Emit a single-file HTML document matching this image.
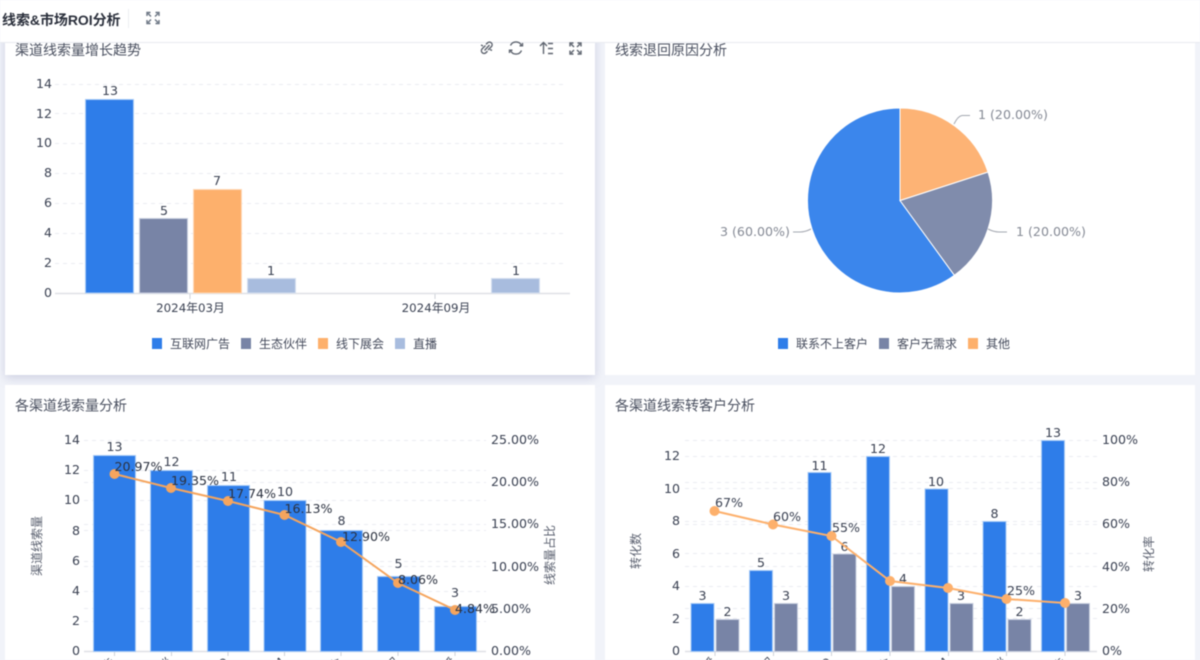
<!DOCTYPE html>
<html lang="zh">
<head>
<meta charset="utf-8">
<style>
html,body{margin:0;padding:0;width:1200px;height:660px;overflow:hidden;background:#f1f3f9}
svg{display:block;filter:blur(0.45px)}
text{font-family:"DejaVu Sans","Noto Sans CJK SC",sans-serif;fill:#3a4152;font-size:12.6px}
.t{font-family:"Liberation Sans","Noto Sans CJK SC",sans-serif;font-size:14px;fill:#4a5060}
.c{font-family:"Noto Sans CJK SC",sans-serif;font-size:12px;fill:#454b5c}
.g{stroke:#ebedf2;stroke-width:1;stroke-dasharray:4 4;fill:none}
.ax{stroke:#dfe1e6;stroke-width:1.5;fill:none}
.i{fill:none;stroke:#5f6570;stroke-width:1.4}
.bb{fill:#2e7de9;stroke:#a9cbf6;stroke-width:1}
.bg{fill:#7884a6;stroke:#c9cfdf;stroke-width:1}
.bo{fill:#fdb06c;stroke:#fed9b8;stroke-width:1}
.bl{fill:#a8bcde;stroke:#d5dfef;stroke-width:1}
.m{text-anchor:middle}
.e{text-anchor:end}
</style>
</head>
<body>
<svg width="1200" height="660" viewBox="0 0 1200 660" xmlns="http://www.w3.org/2000/svg">
<defs>
<filter id="s" x="-5%" y="-5%" width="110%" height="115%"><feDropShadow dx="0" dy="3" stdDeviation="5" flood-color="#8b8fb5" flood-opacity=".35"/></filter>
</defs>
<rect width="1200" height="660" fill="#f1f3f9"/>
<rect x="5" y="30" width="590" height="345" fill="#fff" filter="url(#s)"/>
<rect x="605" y="30" width="590" height="345" fill="#fff"/>
<rect x="5" y="385" width="590" height="275" fill="#fff"/>
<rect x="605" y="385" width="590" height="275" fill="#fff"/>
<text class="t" x="15" y="55">渠道线索量增长趋势</text>
<text class="t" x="615" y="55">线索退回原因分析</text>
<rect x="0" y="0" width="1200" height="42" fill="#fff"/>
<line x1="0" y1="42.500" x2="1200" y2="42.500" stroke="#e9ebf0"/>

<text x="2" y="25" style="font-family:'Liberation Sans','Noto Sans CJK SC',sans-serif;font-size:14px;font-weight:700;fill:#2b303c;letter-spacing:-.05px">线索&amp;市场ROI分析</text>
<line x1="128.500" y1="9" x2="128.500" y2="28" stroke="#eceef2"/>
<g class="i" style="stroke:#6b7583"><path d="M147 16v-3.500h3.500M155.500 12.500h3.500v3.500M159 20v3.500h-3.500M150.500 23.500h-3.500v-3.500M148 13.500l3 3M158 13.500l-3 3M158 22.500l-3-3M148 22.500l3-3"/></g>

<text class="t" x="15" y="410.500">各渠道线索量分析</text>
<text class="t" x="615" y="410.500">各渠道线索转客户分析</text>

<g class="i">
<path d="M485.500 45.500l-3.500 3.500a2.700 2.700 0 0 0 3.800 3.800l1.700-1.700M488 50l3.500-3.500a2.700 2.700 0 0 0-3.800-3.800l-1.700 1.700M484.500 50.500l5-5.500M481 45l2 1M492 50.500l-2-1"/>
<path d="M510.500 45.500A6 6 0 0 1 521.500 45.500M521.500 50.500A6 6 0 0 1 510.500 50.500"/>
<path d="M519.500 45.800h3v-2.800M512.500 50.200h-3v2.800"/>
<path d="M543.500 54v-11M540 46l3.500-3.500 3.500 3.500M548 43.500h5M548 48.500h5M548 53.500h5"/>
<path d="M570 46.500v-3.500h3.500M577.500 43h3.500v3.500M581 50.500v3.500h-3.500M573.500 54h-3.500v-3.500M571 44l3 3M580 44l-3 3M580 53l-3-3M571 53l3-3"/>
</g>

<!-- chart 1 -->
<g class="g"><path d="M55 263.500H567M55 233.500H567M55 203.500H567M55 173.500H567M55 143.500H567M55 113.500H567M55 84.500H567"/></g>
<line class="ax" x1="55" y1="293.500" x2="570" y2="293.500"/>
<path d="M190 294v5M435 294v5" stroke="#cfd2d8"/>
<g class="e">
<text x="52" y="297">0</text><text x="52" y="267">2</text><text x="52" y="237">4</text><text x="52" y="207">6</text><text x="52" y="177">8</text><text x="52" y="147">10</text><text x="52" y="118">12</text><text x="52" y="88">14</text>
</g>
<rect class="bb" x="85.500" y="99.500" width="48" height="193.500"/>
<rect class="bg" x="139.500" y="218.500" width="48" height="74.500"/>
<rect class="bo" x="193.500" y="189.500" width="48" height="103.500"/>
<rect class="bl" x="247.500" y="278.500" width="48" height="14.500"/>
<rect class="bl" x="491.500" y="278.500" width="48" height="14.500"/>
<g class="m">
<text x="110" y="95">13</text><text x="164" y="215">5</text><text x="217" y="185">7</text><text x="271" y="275">1</text><text x="516" y="275">1</text>
<text x="190.500" y="312" style="font-size:11.800px">2024年03月</text>
<text x="436" y="312" style="font-size:11.800px">2024年09月</text>
</g>
<rect x="152" y="338" width="10" height="11" fill="#2e7de9"/>
<text class="c" x="170" y="348">互联网广告</text>
<rect x="241" y="338" width="10" height="11" fill="#7884a6"/>
<text class="c" x="259" y="348">生态伙伴</text>
<rect x="318" y="338" width="10" height="11" fill="#fdb06c"/>
<text class="c" x="336" y="348">线下展会</text>
<rect x="395" y="338" width="10" height="11" fill="#a8bcde"/>
<text class="c" x="413" y="348">直播</text>

<!-- pie -->
<path d="M900 200.500L954.400 275.300A92.500 92.500 0 1 1 900 108Z" fill="#3b86ec" stroke="#fff" stroke-width="1"/>
<path d="M900 200.500L988 172A92.500 92.500 0 0 1 954.400 275.300Z" fill="#808cac" stroke="#fff" stroke-width="1"/>
<path d="M900 200.500V108A92.500 92.500 0 0 1 988 172Z" fill="#fdb375" stroke="#fff" stroke-width="1"/>
<g fill="none" stroke="#a3a7b0" stroke-width="1">
<path d="M954 124Q958 116 962 115.500H970"/>
<path d="M988 229Q994 232 999 232H1007"/>
<path d="M811 229Q805 232 800 232H793"/>
</g>
<text x="978" y="119" style="fill:#858a95">1 (20.00%)</text>
<text x="1016" y="236" style="fill:#858a95">1 (20.00%)</text>
<text x="720" y="236" style="fill:#858a95">3 (60.00%)</text>
<rect x="778" y="338" width="10" height="11" fill="#2e7de9"/>
<text class="c" x="796" y="348">联系不上客户</text>
<rect x="879" y="338" width="10" height="11" fill="#7884a6"/>
<text class="c" x="897" y="348">客户无需求</text>
<rect x="968" y="338" width="10" height="11" fill="#fdb06c"/>
<text class="c" x="986" y="348">其他</text>

<!-- chart 3 -->
<g class="g"><path d="M84 621.500H486M84 591.500H486M84 561.500H486M84 530.500H486M84 500.500H486M84 470.500H486M84 440.500H486M84 608.500H486M84 566.500H486M84 524.500H486M84 482.500H486"/></g>
<line class="ax" x1="84" y1="651.500" x2="486" y2="651.500"/>
<path d="M114.500 652v4M171.500 652v4M228 652v4M284.500 652v4M341 652v4M398 652v4M455 652v4" stroke="#cfd2d8"/>
<g class="e">
<text x="80" y="655">0</text><text x="80" y="625">2</text><text x="80" y="595">4</text><text x="80" y="565">6</text><text x="80" y="535">8</text><text x="80" y="504">10</text><text x="80" y="474">12</text><text x="80" y="444">14</text>
</g>
<g>
<text x="491" y="655">0.00%</text><text x="491" y="613">5.00%</text><text x="491" y="571">10.00%</text><text x="491" y="528">15.00%</text><text x="491" y="486">20.00%</text><text x="491" y="444">25.00%</text>
</g>
<text class="c" transform="translate(41 576) rotate(-90)" style="fill:#5b6170">渠道线索量</text>
<text class="c" transform="translate(554 585) rotate(-90)" style="fill:#5b6170">线索量占比</text>
<rect class="bb" x="93.500" y="455.500" width="42" height="196"/>
<rect class="bb" x="150.500" y="470.500" width="42" height="181"/>
<rect class="bb" x="207.500" y="485.500" width="42" height="166"/>
<rect class="bb" x="264" y="500.500" width="42" height="151"/>
<rect class="bb" x="320.500" y="530.500" width="42" height="121"/>
<rect class="bb" x="377.500" y="576.500" width="42" height="75"/>
<rect class="bb" x="434.500" y="606.500" width="42" height="45"/>
<g class="m">
<text x="114.500" y="451">13</text><text x="171.500" y="466">12</text><text x="229" y="481">11</text><text x="285" y="496">10</text><text x="341.500" y="525">8</text><text x="398.500" y="568">5</text><text x="455" y="597">3</text>
</g>
<path d="M114.500 474L171 488L228 501L284.500 515L341 542L398 583L455 610" fill="none" stroke="#f5a55e" stroke-width="2"/>
<g fill="#f5a55e"><circle cx="114.500" cy="474" r="5"/><circle cx="171" cy="488" r="5"/><circle cx="228" cy="501" r="5"/><circle cx="284.500" cy="515" r="5"/><circle cx="341" cy="542" r="5"/><circle cx="398" cy="583" r="5"/><circle cx="455" cy="610" r="5"/></g>
<text x="114.500" y="471" style="fill:#2c3240">20.97%</text>
<text x="171" y="485" style="fill:#2c3240">19.35%</text>
<text x="228" y="498" style="fill:#2c3240">17.74%</text>
<text x="284.500" y="513" style="fill:#2c3240">16.13%</text>
<text x="342" y="541" style="fill:#2c3240">12.90%</text>
<text x="398" y="584" style="fill:#2c3240">8.06%</text>
<text x="455" y="613" style="fill:#2c3240">4.84%</text>
<g style="font-size:12px">
<text class="e" transform="translate(116 663) rotate(-45)">广告</text>
<text class="e" transform="translate(173 663) rotate(-45)">伙伴</text>
<text class="e" transform="translate(230 663) rotate(-45)">SEO</text>
<text class="e" transform="translate(286 663) rotate(-45)">SEM</text>
<text class="e" transform="translate(343 663) rotate(-45)">展会</text>
<text class="e" transform="translate(400 663) rotate(-45)">转介绍</text>
<text class="e" transform="translate(457 663) rotate(-45)">直播</text>
</g>

<!-- chart 4 -->
<g class="g"><path d="M685 618.500H1097M685 586.500H1097M685 553.500H1097M685 521.500H1097M685 488.500H1097M685 456.500H1097M685 608.500H1097M685 566.500H1097M685 524.500H1097M685 482.500H1097M685 440.500H1097"/></g>
<line class="ax" x1="685" y1="651.500" x2="1097" y2="651.500"/>
<path d="M715 652v4M773.500 652v4M831.500 652v4M890 652v4M948.500 652v4M1006.500 652v4M1065 652v4" stroke="#cfd2d8"/>
<g class="e">
<text x="680" y="655">0</text><text x="680" y="623">2</text><text x="680" y="590">4</text><text x="680" y="558">6</text><text x="680" y="525">8</text><text x="680" y="493">10</text><text x="680" y="460">12</text>
</g>
<g>
<text x="1102" y="655">0%</text><text x="1102" y="613">20%</text><text x="1102" y="571">40%</text><text x="1102" y="528">60%</text><text x="1102" y="486">80%</text><text x="1102" y="444">100%</text>
</g>
<text class="c" transform="translate(640 569) rotate(-90)" style="fill:#5b6170">转化数</text>
<text class="c" transform="translate(1153 572) rotate(-90)" style="fill:#5b6170">转化率</text>
<rect class="bb" x="691" y="603.500" width="23" height="48"/><rect class="bg" x="716" y="619.500" width="23" height="32"/>
<rect class="bb" x="749.500" y="570.500" width="23" height="81"/><rect class="bg" x="774.500" y="603.500" width="23" height="48"/>
<rect class="bb" x="808" y="472.500" width="23" height="179"/><rect class="bg" x="833" y="554" width="23" height="97.500"/>
<rect class="bb" x="866.500" y="456.500" width="23" height="195"/><rect class="bg" x="891.500" y="586.500" width="23" height="65"/>
<rect class="bb" x="925" y="489" width="23" height="162.500"/><rect class="bg" x="950" y="603.500" width="23" height="48"/>
<rect class="bb" x="983" y="521.500" width="23" height="130"/><rect class="bg" x="1008" y="619.500" width="23" height="32"/>
<rect class="bb" x="1041.500" y="440.500" width="23" height="211"/><rect class="bg" x="1066.500" y="603.500" width="23" height="48"/>
<g class="m">
<text x="702.500" y="600">3</text><text x="727.500" y="616">2</text>
<text x="761" y="567">5</text><text x="786" y="600">3</text>
<text x="819.500" y="470">11</text><text x="844.500" y="551">6</text>
<text x="878" y="453">12</text><text x="903" y="583">4</text>
<text x="936" y="486">10</text><text x="961" y="600">3</text>
<text x="994.500" y="518">8</text><text x="1019.500" y="616">2</text>
<text x="1053" y="437">13</text><text x="1078" y="600">3</text>
</g>
<path d="M714.500 511L773 524.500L831.500 536L890 581L948 588L1006.500 599L1065 603" fill="none" stroke="#fdb06c" stroke-width="2"/>
<g fill="#fdb06c"><circle cx="714.500" cy="511" r="5"/><circle cx="773" cy="524.500" r="5"/><circle cx="831.500" cy="536" r="5"/><circle cx="890" cy="581" r="5"/><circle cx="948" cy="588" r="5"/><circle cx="1006.500" cy="599" r="5"/><circle cx="1065" cy="603" r="5"/></g>
<text x="715" y="507">67%</text>
<text x="773" y="521">60%</text>
<text x="832" y="532">55%</text>
<text x="1007" y="595">25%</text>
<g style="font-size:12px">
<text class="e" transform="translate(717 663) rotate(-45)">直播</text>
<text class="e" transform="translate(775 663) rotate(-45)">转介绍</text>
<text class="e" transform="translate(833 663) rotate(-45)">SEO</text>
<text class="e" transform="translate(892 663) rotate(-45)">展会</text>
<text class="e" transform="translate(950 663) rotate(-45)">SEM</text>
<text class="e" transform="translate(1008 663) rotate(-45)">伙伴</text>
<text class="e" transform="translate(1067 663) rotate(-45)">广告</text>
</g>
</svg>
</body>
</html>
